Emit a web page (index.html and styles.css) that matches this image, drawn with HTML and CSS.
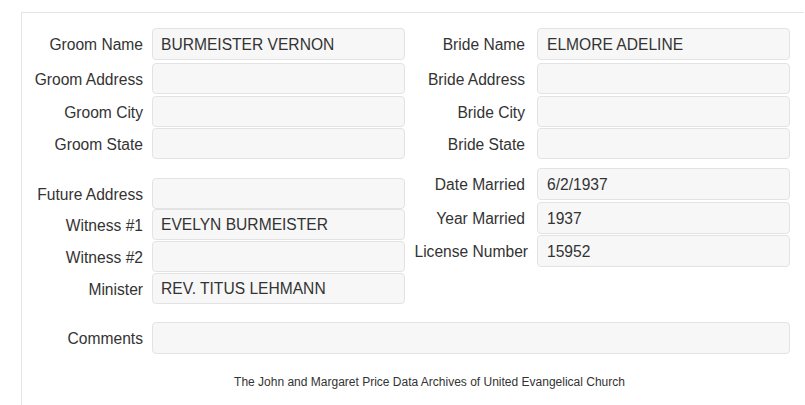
FILE: index.html
```html
<!DOCTYPE html>
<html lang="en">
<head>
<meta charset="utf-8">
<title>Marriage Record</title>
<link rel="stylesheet" href="styles.css">
</head>
<body>
<div class="panel">
  <div class="columns">
    <div class="col col-left">
      <div class="row r-first"><label>Groom Name</label><input class="field" readonly value="BURMEISTER VERNON"></div>
      <div class="row r-m4"><label>Groom Address</label><input class="field" readonly value=""></div>
      <div class="row r-m2"><label>Groom City</label><input class="field" readonly value=""></div>
      <div class="row r-m1"><label>Groom State</label><input class="field" readonly value=""></div>

      <div class="row r-future"><label>Future Address</label><input class="field" readonly value=""></div>
      <div class="row r-m0"><label>Witness #1</label><input class="field" readonly value="EVELYN BURMEISTER"></div>
      <div class="row r-m1"><label>Witness #2</label><input class="field" readonly value=""></div>
      <div class="row r-m1"><label>Minister</label><input class="field" readonly value="REV. TITUS LEHMANN"></div>
    </div>
    <div class="col col-right">
      <div class="row r-first"><label>Bride Name</label><input class="field" readonly value="ELMORE ADELINE"></div>
      <div class="row r-m4"><label>Bride Address</label><input class="field" readonly value=""></div>
      <div class="row r-m2"><label>Bride City</label><input class="field" readonly value=""></div>
      <div class="row r-m1"><label>Bride State</label><input class="field" readonly value=""></div>

      <div class="row r-date"><label>Date Married</label><input class="field" readonly value="6/2/1937"></div>
      <div class="row r-m2"><label>Year Married</label><input class="field" readonly value="1937"></div>
      <div class="row r-m1"><label class="label-wide">License Number</label><input class="field" readonly value="15952"></div>
    </div>
  </div>
  <div class="row row-wide"><label>Comments</label><input class="field" readonly value=""></div>
  <p class="footer">The John and Margaret Price Data Archives of United Evangelical Church</p>
</div>
</body>
</html>
```

FILE: styles.css
```css
html, body {
  margin: 0;
  padding: 0;
  background: #ffffff;
  overflow: hidden;
}

body {
  font-family: "Liberation Sans", Arial, sans-serif;
  color: #333333;
  font-size: 15.6px;
}

.panel {
  margin: 12px 0 0 21px;
  width: 783px;
  height: 393px;
  border-top: 1px solid #e5e5e5;
  border-left: 1px solid #e5e5e5;
  box-sizing: border-box;
  padding-top: 15px;
}

.columns {
  display: flex;
}

.col {
  display: flex;
  flex-direction: column;
}

.col-left {
  width: 383px;
}

.col-left .row {
  grid-template-columns: 121px 253px;
  column-gap: 9px;
}

.col-right .row {
  grid-template-columns: 120px 253px;
  column-gap: 12px;
}

.row {
  display: grid;
  align-items: center;
  height: 31px;
}

.row label {
  text-align: right;
  white-space: nowrap;
  padding-top: 2px;
}

.row .label-wide {
  margin-right: -3px;
}

.field {
  box-sizing: border-box;
  height: 100%;
  width: 100%;
  margin: 0;
  padding: 1px 8px 0 8px;
  border: 1px solid #e3e3e3;
  border-radius: 4px;
  background: #f7f7f7;
  color: #333333;
  font-family: "Liberation Sans", Arial, sans-serif;
  font-size: 15.6px;
  outline: none;
}

.col-right .field {
  padding-left: 9px;
}

.r-first { height: 32px; margin-top: 0; }
.r-m0 { margin-top: 0; }
.r-m1 { margin-top: 1px; }
.r-m2 { margin-top: 2px; }
.r-m4 { margin-top: 3px; }
.r-future { margin-top: 19px; }
.r-date { margin-top: 9px; height: 32px; }
.col-right .r-date ~ .row { height: 32px; }

.row-wide {
  grid-template-columns: 121px 638px;
  column-gap: 9px;
  height: 32px;
  margin-top: 18px;
}

.footer {
  margin: 21px 0 0 0;
  padding-left: 33px;
  text-align: center;
  font-size: 12px;
  color: #333333;
}
```
